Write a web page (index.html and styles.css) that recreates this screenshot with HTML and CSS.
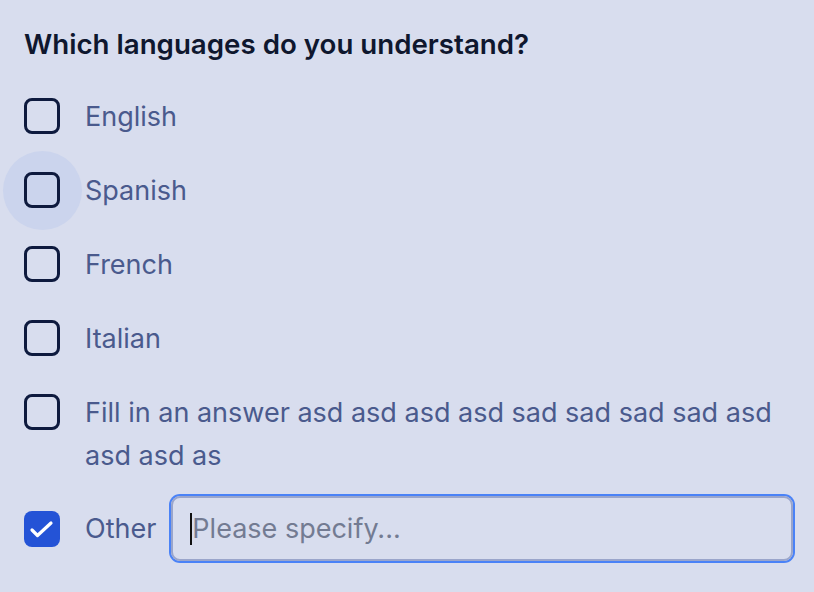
FILE: index.html
```html
<!DOCTYPE html>
<html lang="en">
    <head>
        <title>Languages</title>
        <link rel="stylesheet" href="styles.css">
    </head>
    <body>
        <main class="question">
            <h2>Which languages do you understand?</h2>
            <div class="options">
                <label class="option">
                    <span class="box"></span>
                    <span class="text">English</span>
                </label>
                <label class="option">
                    <span class="box hovered"></span>
                    <span class="text">Spanish</span>
                </label>
                <label class="option">
                    <span class="box"></span>
                    <span class="text">French</span>
                </label>
                <label class="option">
                    <span class="box"></span>
                    <span class="text">Italian</span>
                </label>
                <label class="option">
                    <span class="box"></span>
                    <span class="text">Fill in an answer asd asd asd asd sad sad sad sad asd asd asd as</span>
                </label>
                <div class="option other">
                    <span class="box checked">
                        <svg viewBox="0 0 36 36" width="36" height="36"><path d="M8 19l5.5 5.5L27 12" fill="none" stroke="white" stroke-width="3.2" stroke-linecap="round" stroke-linejoin="round"/></svg>
                    </span>
                    <span class="text">Other</span>
                    <div class="specify">
                        <span class="caret"></span>
                        <span class="placeholder">Please specify...</span>
                    </div>
                </div>
            </div>
        </main>
    </body>
</html>
```
FILE: styles.css
```css
:root {
    --background: #d8ddee;
    --heading-color: #0f172e;
    --label-color: #4a5a8d;
    --box-border: #0e1a3e;
    --hover-ring: #cbd4ed;
    --checked: #2453d6;
    --input-border: #9aa5cb;
    --focus-ring: #4a82f7;
    --placeholder: #737b92;
}

body {
    margin: 0;
    background-color: var(--background);
    font-family: Inter, "Noto Sans", sans-serif;
}

.question {
    padding: 24px 21px 40px 24px;
}

h2 {
    margin: 0 0 31px 0;
    font-size: 27.7px;
    font-weight: 600;
    line-height: 40px;
    color: var(--heading-color);
}

.options {
    display: flex;
    flex-direction: column;
    gap: 31px;
}

.option {
    display: flex;
    align-items: flex-start;
    gap: 25px;
}

.box {
    position: relative;
    flex: none;
    width: 36px;
    height: 36px;
    margin-top: 3px;
    box-sizing: border-box;
    border: 3.2px solid var(--box-border);
    border-radius: 8px;
}

.box.hovered::before {
    content: "";
    position: absolute;
    left: -24px;
    top: -24px;
    width: 79px;
    height: 79px;
    border-radius: 50%;
    background-color: var(--hover-ring);
    z-index: -1;
}

.box.checked {
    border: none;
    background-color: var(--checked);
    margin-top: 0;
}

.box.checked svg {
    display: block;
}

.text {
    font-size: 27px;
    line-height: 43px;
    color: var(--label-color);
}

.other {
    align-items: center;
    gap: 0;
    height: 65px;
    margin-top: -12px;
}

.other .box {
    margin-right: 25px;
}

.specify {
    flex: 1;
    height: 65px;
    margin-left: 15px;
    box-sizing: border-box;
    border: 2px solid var(--input-border);
    border-radius: 9px;
    box-shadow: 0 0 0 2px var(--focus-ring);
    display: flex;
    align-items: center;
    padding-left: 17px;
}

.caret {
    width: 2px;
    height: 32px;
    background-color: #111;
}

.placeholder {
    font-size: 27px;
    color: var(--placeholder);
}
```
